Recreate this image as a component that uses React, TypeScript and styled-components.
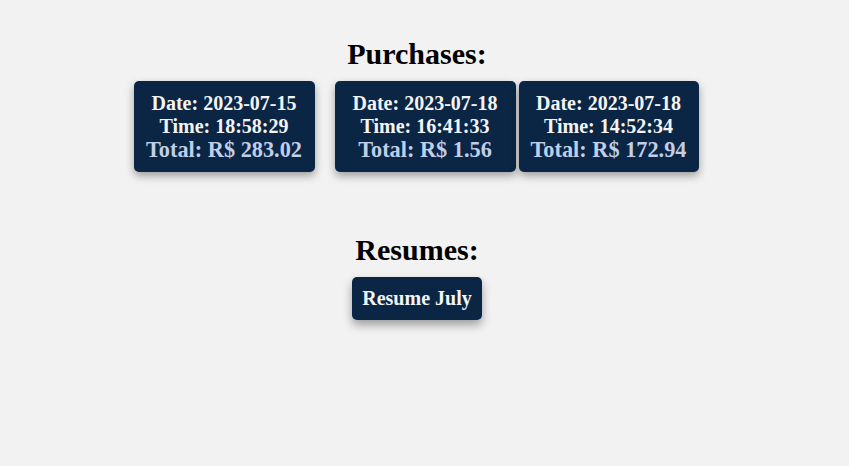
import React from "react";
import styled, { createGlobalStyle } from "styled-components";

const Global = createGlobalStyle`
  html, body { margin: 0; padding: 0; background: #f2f2f2; }
  body { font-family: "Liberation Serif", "Times New Roman", serif; }
`;

const Main = styled.main`
  width: 834px;
  display: flex;
  flex-direction: column;
  align-items: center;
  padding: 37px 0 40px;
`;

const Heading = styled.h2<{ $gap: number }>`
  margin: 0 0 ${(p) => p.$gap}px 0;
  font-size: 30px;
  line-height: 34px;
  font-weight: bold;
  color: #000;
`;

const CardRow = styled.div`
  display: flex;
  justify-content: center;
  margin: 0 2px 61px 0;
`;

const Card = styled.div<{ $w: number; $ml: number }>`
  width: ${(p) => p.$w}px;
  margin-left: ${(p) => p.$ml}px;
  box-sizing: border-box;
  height: 91px;
  padding: 10px 0;
  background: #0b2545;
  border-radius: 5px;
  box-shadow: 0 4px 8px rgba(0, 0, 0, 0.35);
  display: flex;
  flex-direction: column;
  align-items: center;
  justify-content: center;
  font-weight: bold;
`;

const Line = styled.div`
  font-size: 20px;
  line-height: 23px;
  color: #f4f4f4;
  white-space: nowrap;
`;

const Total = styled.div`
  font-size: 22.3px;
  line-height: 24px;
  color: #c0cfe8;
  white-space: nowrap;
`;

const Button = styled.button`
  font-family: "Liberation Serif", "Times New Roman", serif;
  font-weight: bold;
  font-size: 20px;
  line-height: 23px;
  color: #f4f4f4;
  background: #0b2545;
  border: none;
  border-radius: 5px;
  padding: 10px 0;
  width: 130px;
  height: 43px;
  box-sizing: border-box;
  white-space: nowrap;
  box-shadow: 0 5px 10px rgba(0, 0, 0, 0.35);
  cursor: pointer;
`;

const purchases = [
  { date: "2023-07-15", time: "18:58:29", total: "283.02", w: 181, ml: 0 },
  { date: "2023-07-18", time: "16:41:33", total: "1.56", w: 181, ml: 20 },
  { date: "2023-07-18", time: "14:52:34", total: "172.94", w: 180, ml: 3 },
];

export default function App() {
  return (
    <>
      <Global />
      <Main>
        <Heading $gap={10}>Purchases:</Heading>
        <CardRow>
          {purchases.map((p, i) => (
            <Card key={i} $w={p.w} $ml={p.ml}>
              <Line>Date: {p.date}</Line>
              <Line>Time: {p.time}</Line>
              <Total>Total: R$ {p.total}</Total>
            </Card>
          ))}
        </CardRow>
        <Heading $gap={10}>Resumes:</Heading>
        <Button>Resume July</Button>
      </Main>
    </>
  );
}
